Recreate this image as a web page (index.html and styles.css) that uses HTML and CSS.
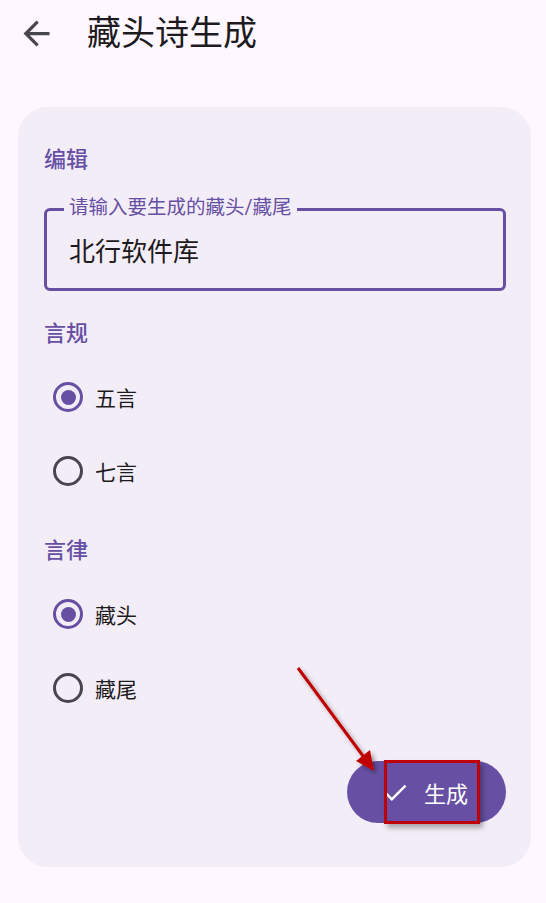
FILE: index.html
```html
<!DOCTYPE html>
<html lang="zh-CN">
<head>
  <meta charset="UTF-8" />
  <meta name="viewport" content="width=device-width, initial-scale=1.0" />
  <title>藏头诗生成</title>
  <link rel="stylesheet" href="styles.css">
</head>
<body>
  <!-- Top bar -->
  <header class="top-bar">
    <button class="back-btn" aria-label="返回">
      <svg viewBox="0 0 24 24" width="39" height="39">
        <path d="M20 11H7.83l5.59-5.59L12 4l-8 8 8 8 1.41-1.41L7.83 13H20v-2z" fill="#49454F"/>
      </svg>
    </button>
    <h1 class="title">藏头诗生成</h1>
  </header>

  <!-- Form card -->
  <main class="card">
    <h2 class="section-label">编辑</h2>
    <label class="text-field">
      <span class="field-label">请输入要生成的藏头/藏尾</span>
      <input type="text" value="北行软件库" />
    </label>

    <h2 class="section-label gap-top">言规</h2>
    <div class="radio-group">
      <div class="radio-row"><span class="radio checked"></span><span>五言</span></div>
      <div class="radio-row"><span class="radio"></span><span>七言</span></div>
    </div>

    <h2 class="section-label gap-top">言律</h2>
    <div class="radio-group">
      <div class="radio-row"><span class="radio checked"></span><span>藏头</span></div>
      <div class="radio-row"><span class="radio"></span><span>藏尾</span></div>
    </div>

    <div class="actions">
      <button class="fab">
        <svg viewBox="0 0 24 24" width="29" height="29">
          <path d="M9 16.17L4.83 12l-1.42 1.41L9 19 21 7l-1.41-1.41z" fill="#ffffff"/>
        </svg>
        <span>生成</span>
      </button>
    </div>
  </main>

  <!-- Annotation overlay -->
  <div class="annotation">
    <svg class="arrow" width="546" height="903" viewBox="0 0 546 903">
      <defs>
        <filter id="shadow" x="-20%" y="-20%" width="140%" height="140%">
          <feDropShadow dx="3" dy="3" stdDeviation="2" flood-color="#000" flood-opacity="0.35"/>
        </filter>
      </defs>
      <g filter="url(#shadow)">
        <line x1="298" y1="668" x2="366" y2="760" stroke="#C00000" stroke-width="3"/>
        <polygon points="374,771 356,761 370,750" fill="#C00000"/>
      </g>
    </svg>
    <div class="mark-box"></div>
  </div>
</body>
</html>
```

FILE: styles.css
```css
body {
  margin: 0;
  background: #FEF7FF;
  font-family: Roboto, "Noto Sans CJK SC", sans-serif;
  color: #1D1B20;
  position: relative;
  min-height: 903px;
}

.top-bar {
  display: flex;
  align-items: center;
  height: 66px;
  padding-left: 17px;
}

.back-btn {
  border: none;
  background: none;
  padding: 0;
  width: 39px;
  height: 39px;
  display: flex;
}

.title {
  margin: 0 0 0 31px;
  font-size: 34px;
  font-weight: 400;
  line-height: 40px;
}

.card {
  margin: 41px 15px 0 18px;
  background: #F3EDF7;
  border-radius: 30px;
  padding: 36px 25px 44px 26px;
}

.section-label {
  margin: 0;
  font-size: 22px;
  line-height: 34px;
  font-weight: 500;
  color: #6750A4;
}

.gap-top {
  margin-top: 26px;
}

.text-field {
  display: block;
  position: relative;
  margin-top: 31px;
  height: 83px;
  box-sizing: border-box;
  border: 3px solid #6750A4;
  border-radius: 6px;
}

.field-label {
  position: absolute;
  top: -14px;
  left: 17px;
  padding: 0 5px;
  background: #F3EDF7;
  color: #6750A4;
  font-size: 19.5px;
  line-height: 22px;
}

.text-field input {
  border: none;
  outline: none;
  background: none;
  width: 100%;
  height: 100%;
  box-sizing: border-box;
  padding: 0 22px;
  font-family: inherit;
  font-size: 26px;
  color: #1D1B20;
}

.radio-group {
  margin-top: 9px;
}

.radio-row {
  display: flex;
  align-items: center;
  height: 74px;
  font-size: 21px;
  gap: 12px;
  padding-left: 9px;
}

.radio {
  width: 30px;
  height: 30px;
  box-sizing: border-box;
  border: 3px solid #49454F;
  border-radius: 50%;
  display: flex;
  align-items: center;
  justify-content: center;
}

.radio.checked {
  border-color: #6750A4;
}

.radio.checked::after {
  content: "";
  width: 15px;
  height: 15px;
  border-radius: 50%;
  background: #6750A4;
}

.actions {
  display: flex;
  justify-content: flex-end;
  margin-top: 36px;
}

.fab {
  display: flex;
  align-items: center;
  gap: 14px;
  height: 62px;
  padding: 0 38px 0 34px;
  border: none;
  border-radius: 31px;
  background: #6750A4;
  color: #fff;
  font-family: inherit;
  font-size: 22px;
}

.annotation {
  position: absolute;
  top: 0;
  left: 0;
  width: 546px;
  height: 903px;
  pointer-events: none;
}

.arrow {
  position: absolute;
  top: 0;
  left: 0;
}

.mark-box {
  position: absolute;
  left: 384px;
  top: 760px;
  width: 96px;
  height: 64px;
  box-sizing: border-box;
  border: 3px solid #C00000;
  box-shadow: 3px 4px 5px rgba(0, 0, 0, 0.3);
}
```
